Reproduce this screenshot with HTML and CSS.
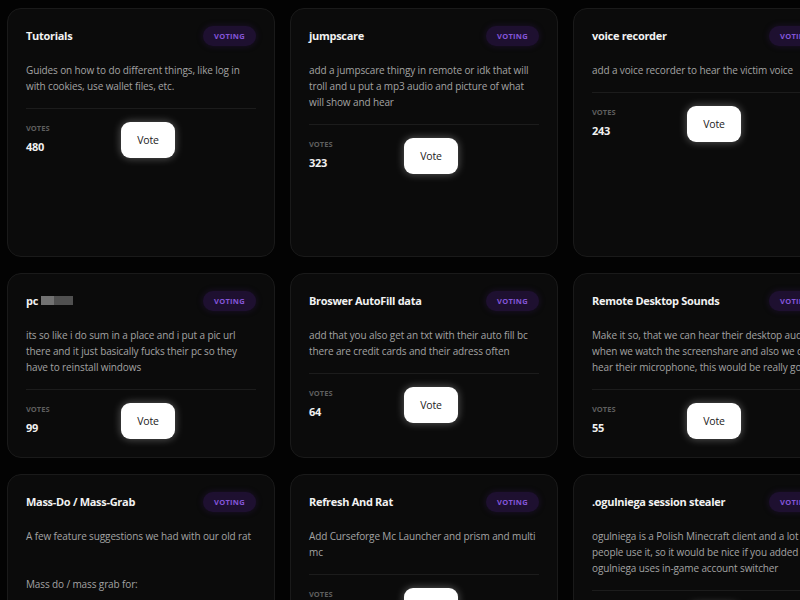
FILE: index.html
```html
<!DOCTYPE html>
<html>
<head>
<meta charset="utf-8">
<link rel="stylesheet" href="styles.css">
</head>
<body>
<div class="grid">
  <div class="card">
    <div class="head"><span class="title">Tutorials</span><span class="badge">Voting</span></div>
    <p class="desc">Guides on how to do different things, like log in with cookies, use wallet files, etc.</p>
    <div class="foot"><div class="votes"><span class="lbl">Votes</span><span class="num">480</span></div><button class="vote">Vote</button></div>
  </div>
  <div class="card">
    <div class="head"><span class="title">jumpscare</span><span class="badge">Voting</span></div>
    <p class="desc">add a jumpscare thingy in remote or idk that will troll and u put a mp3 audio and picture of what will show and hear</p>
    <div class="foot"><div class="votes"><span class="lbl">Votes</span><span class="num">323</span></div><button class="vote">Vote</button></div>
  </div>
  <div class="card">
    <div class="head"><span class="title">voice recorder</span><span class="badge">Voting</span></div>
    <p class="desc">add a voice recorder to hear the victim voice</p>
    <div class="foot"><div class="votes"><span class="lbl">Votes</span><span class="num">243</span></div><button class="vote">Vote</button></div>
  </div>
  <div class="card">
    <div class="head"><span class="title">Keylogger</span><span class="badge">Voting</span></div>
    <p class="desc">add a keylogger that logs every key the victim presses and sends it to the webhook every few minutes so you can see what they typed, including passwords, messages and searches they made in the browser and other apps, and also the window title of the app they were typing in so it is easier to understand the logs later on</p>
    <div class="foot"><div class="votes"><span class="lbl">Votes</span><span class="num">201</span></div><button class="vote">Vote</button></div>
  </div>

  <div class="card">
    <div class="head"><span class="title">pc <span class="censor"></span></span><span class="badge">Voting</span></div>
    <p class="desc">its so like i do sum in a place and i put a pic url there and it just basically fucks their pc so they have to reinstall windows</p>
    <div class="foot"><div class="votes"><span class="lbl">Votes</span><span class="num">99</span></div><button class="vote">Vote</button></div>
  </div>
  <div class="card">
    <div class="head"><span class="title">Broswer AutoFill data</span><span class="badge">Voting</span></div>
    <p class="desc">add that you also get an txt with their auto fill bc there are credit cards and their adress often</p>
    <div class="foot"><div class="votes"><span class="lbl">Votes</span><span class="num">64</span></div><button class="vote">Vote</button></div>
  </div>
  <div class="card">
    <div class="head"><span class="title">Remote Desktop Sounds</span><span class="badge">Voting</span></div>
    <p class="desc">Make it so, that we can hear their desktop audio when we watch the screenshare and also we can hear their microphone, this would be really good</p>
    <div class="foot"><div class="votes"><span class="lbl">Votes</span><span class="num">55</span></div><button class="vote">Vote</button></div>
  </div>
  <div class="card">
    <div class="head"><span class="title">Webcam</span><span class="badge">Voting</span></div>
    <p class="desc">take a picture with the webcam</p>
    <div class="foot"><div class="votes"><span class="lbl">Votes</span><span class="num">48</span></div><button class="vote">Vote</button></div>
  </div>

  <div class="card">
    <div class="head"><span class="title">Mass-Do / Mass-Grab</span><span class="badge">Voting</span></div>
    <p class="desc pre">A few feature suggestions we had with our old rat


Mass do / mass grab for:

- Passwords
- Cookies
- Tokens</p>
    <div class="foot"><div class="votes"><span class="lbl">Votes</span><span class="num">41</span></div><button class="vote">Vote</button></div>
  </div>
  <div class="card">
    <div class="head"><span class="title">Refresh And Rat</span><span class="badge">Voting</span></div>
    <p class="desc">Add Curseforge Mc Launcher and prism and multi mc</p>
    <div class="foot"><div class="votes"><span class="lbl">Votes</span><span class="num">39</span></div><button class="vote">Vote</button></div>
  </div>
  <div class="card">
    <div class="head"><span class="title">.ogulniega session stealer</span><span class="badge">Voting</span></div>
    <p class="desc">ogulniega is a Polish Minecraft client and a lot of people use it, so it would be nice if you added it. ogulniega uses in-game account switcher</p>
    <div class="foot"><div class="votes"><span class="lbl">Votes</span><span class="num">37</span></div><button class="vote">Vote</button></div>
  </div>
  <div class="card">
    <div class="head"><span class="title">Discord injection</span><span class="badge">Voting</span></div>
    <p class="desc">inject into discord client</p>
    <div class="foot"><div class="votes"><span class="lbl">Votes</span><span class="num">30</span></div><button class="vote">Vote</button></div>
  </div>
</div>
</body>
</html>
```

FILE: styles.css
```css
html, body {
  margin: 0;
  background: #030303;
  overflow: hidden;
  height: 600px;
}
body {
  font-family: "Open Sans", "Noto Sans", sans-serif;
  color: #ededed;
}
.grid {
  display: grid;
  grid-template-columns: repeat(4, 268px);
  column-gap: 15px;
  row-gap: 16px;
  padding: 8px 0 0 7px;
  width: 1200px;
  align-items: stretch;
}
.card {
  background: #0b0b0b;
  border: 1px solid #1a1a1a;
  border-radius: 14px;
  padding: 17px 18px 18px;
  display: flex;
  flex-direction: column;
}
.head {
  display: flex;
  justify-content: space-between;
  align-items: center;
  height: 20px;
}
.title {
  font-size: 11px;
  font-weight: 700;
  color: #f2f2f2;
  letter-spacing: -0.3px;
  display: flex;
  align-items: center;
  gap: 3px;
  margin-top: -1px;
}
.censor {
  display: inline-block;
  width: 32px;
  height: 9px;
  background: linear-gradient(90deg, #727272 0 40%, #505050 40% 100%);
  filter: blur(0.6px);
}
.badge {
  background: #1e1030;
  color: #8455d8;
  font-size: 7.5px;
  font-weight: 700;
  text-transform: uppercase;
  letter-spacing: 0.3px;
  border-radius: 10px;
  width: 53px;
  height: 20px;
  display: flex;
  align-items: center;
  justify-content: center;
  box-shadow: 0 0 6px rgba(60, 25, 110, 0.35);
}
.desc {
  margin: 16px 0 0;
  font-size: 10px;
  line-height: 16px;
  color: #a3a3a3;
  letter-spacing: -0.12px;
}
.pre {
  white-space: pre-line;
}
.foot {
  margin-top: 14px;
  border-top: 1px solid #1c1c1c;
  padding-top: 13px;
  display: flex;
  align-items: flex-start;
}
.votes {
  width: 95px;
  display: flex;
  flex-direction: column;
}
.lbl {
  font-size: 7.5px;
  font-weight: 700;
  text-transform: uppercase;
  color: #5e5e5e;
  line-height: 12px;
}
.num {
  font-size: 11px;
  font-weight: 700;
  color: #f0f0f0;
  line-height: 14px;
  margin-top: 6px;
  letter-spacing: -0.3px;
}
.vote {
  width: 54px;
  height: 36px;
  background: #ffffff;
  color: #222;
  border: none;
  border-radius: 9px;
  font-family: "Open Sans", sans-serif;
  font-size: 10.5px;
  letter-spacing: -0.2px;
  box-shadow: 0 0 8px rgba(255, 255, 255, 0.35);
  padding: 0;
}
```
